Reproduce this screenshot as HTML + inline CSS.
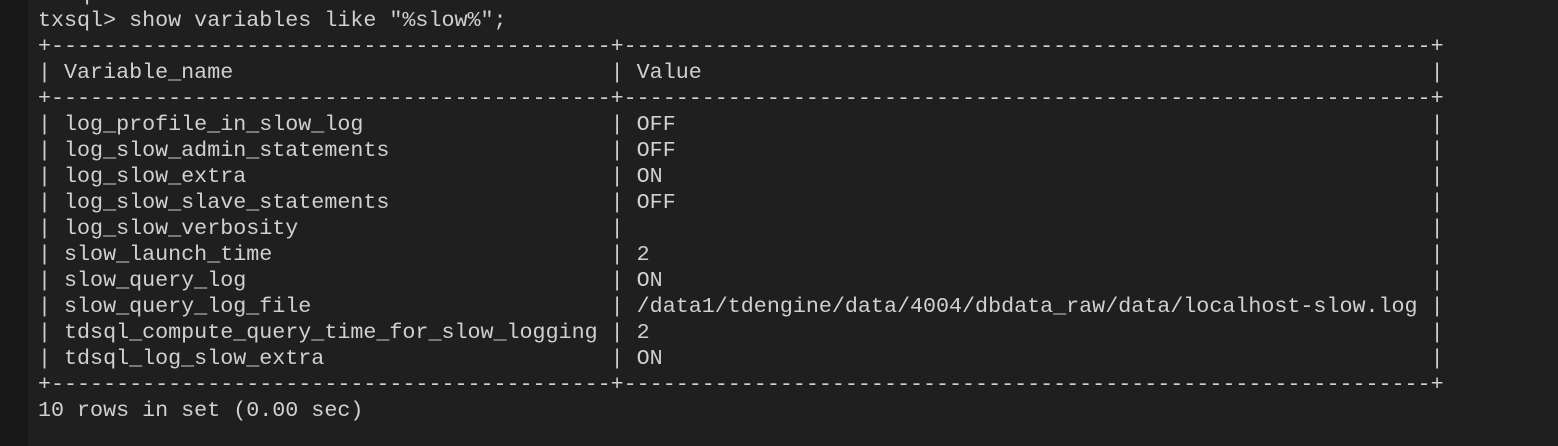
<!DOCTYPE html>
<html><head><meta charset="utf-8"><style>
html,body{margin:0;padding:0;width:1558px;height:446px;overflow:hidden;background:#1f1f1f;}
.strip{position:absolute;left:0;top:0;width:28px;height:446px;background:#181818;}
pre{position:absolute;left:38px;top:-18px;margin:0;font-family:"Liberation Mono",monospace;font-size:21.7px;line-height:26px;color:#d0d0d0;white-space:pre;}
</style></head><body>
<div class="strip"></div>
<pre>txsql&gt;
txsql&gt; show variables like "%slow%";
+-------------------------------------------+--------------------------------------------------------------+
| Variable_name                             | Value                                                        |
+-------------------------------------------+--------------------------------------------------------------+
| log_profile_in_slow_log                   | OFF                                                          |
| log_slow_admin_statements                 | OFF                                                          |
| log_slow_extra                            | ON                                                           |
| log_slow_slave_statements                 | OFF                                                          |
| log_slow_verbosity                        |                                                              |
| slow_launch_time                          | 2                                                            |
| slow_query_log                            | ON                                                           |
| slow_query_log_file                       | /data1/tdengine/data/4004/dbdata_raw/data/localhost-slow.log |
| tdsql_compute_query_time_for_slow_logging | 2                                                            |
| tdsql_log_slow_extra                      | ON                                                           |
+-------------------------------------------+--------------------------------------------------------------+
10 rows in set (0.00 sec)</pre>
</body></html>
